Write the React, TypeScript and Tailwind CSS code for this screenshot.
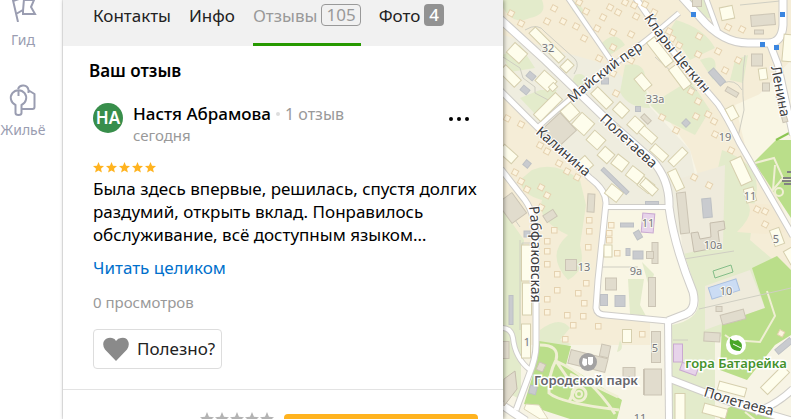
import type { ReactNode } from 'react'

interface Building {
    x: number,
    y: number,
    w: number,
    h: number,
    r?: number,
    kind?: 'light' | 'dark' | 'gray' | 'blue' | 'pink',
}

const houses = [
    [511, 13], [521, 23], [554, 8], [547, 21], [563, 21], [576, 26], [584, 38], [579, 2], [586, 11], [597, 28],
    [603, 17], [610, 7], [618, 12], [613, 32], [613, 47], [599, 58], [625, 2], [634, 5], [636, 16], [631, 34],
    [631, 60], [613, 73], [616, 93], [507, 118], [521, 124], [617, 128], [645, 4], [654, 12], [669, 31], [672, 38],
    [679, 45], [699, 36], [698, 54], [718, 51], [725, 70], [738, 60], [728, 27], [742, 29], [691, 91], [698, 101],
    [708, 114], [714, 121], [696, 116], [715, 134], [662, 117], [676, 130], [731, 150], [694, 177], [709, 185],
    [757, 209], [765, 211], [765, 224], [515, 172], [521, 181], [527, 189], [541, 187], [547, 195], [541, 207],
    [567, 171], [577, 177], [540, 145], [547, 151], [559, 163], [554, 230], [547, 241], [547, 251], [547, 264],
    [557, 274], [589, 220], [589, 231], [588, 247], [611, 225], [609, 233], [609, 240], [617, 253], [547, 299],
    [547, 312], [557, 290], [578, 293], [586, 283], [584, 303], [567, 315], [573, 325], [583, 316], [598, 326],
    [565, 339], [781, 333], [642, 334]
]

const buildings: Building[] = [
    { x: 517, y: 53, w: 17, h: 13, r: 42 },
    { x: 547, y: 45, w: 42, h: 9, r: 45 },
    { x: 567, y: 66, w: 11, h: 9, r: -45 },
    { x: 510, y: 76, w: 22, h: 10, r: 45 },
    { x: 546, y: 81, w: 17, h: 14, r: 42 },
    { x: 553, y: 87, w: 7, h: 6, r: -45 },
    { x: 548, y: 107, w: 31, h: 10, r: -45 },
    { x: 570, y: 112, w: 14, h: 14, r: -42 },
    { x: 583, y: 124, w: 17, h: 16, r: 42 },
    { x: 596, y: 140, w: 15, h: 13, r: 42 },
    { x: 602, y: 98, w: 22, h: 10, r: 45 },
    { x: 621, y: 110, w: 13, h: 11, r: 43 },
    { x: 636, y: 125, w: 14, h: 12, r: 43 },
    { x: 643, y: 82, w: 16, h: 10, r: 50 },
    { x: 558, y: 131, w: 28, h: 24, r: -43, kind: 'dark' },
    { x: 508, y: 154, w: 18, h: 10, r: 42 },
    { x: 584, y: 165, w: 14, h: 13, r: -42 },
    { x: 606, y: 155, w: 13, h: 12, r: 42 },
    { x: 620, y: 163, w: 14, h: 12, r: 38 },
    { x: 635, y: 175, w: 15, h: 12, r: 38 },
    { x: 646, y: 185, w: 14, h: 11, r: 38 },
    { x: 614, y: 193, w: 15, h: 12, r: 38 },
    { x: 659, y: 153, w: 18, h: 9, r: 42 },
    { x: 678, y: 157, w: 20, h: 8, r: -45 },
    { x: 676, y: 180, w: 21, h: 9, r: 65 },
    { x: 649, y: 187, w: 17, h: 9, r: 42 },
    { x: 660, y: 52, w: 31, h: 10, r: 52 },
    { x: 680, y: 77, w: 25, h: 10, r: 53 },
    { x: 732, y: 113, w: 13, h: 9, r: 62 },
    { x: 648, y: 135, w: 18, h: 9, r: 42 },
    { x: 763, y: 74, w: 8, h: 11, r: -8 },
    { x: 788, y: 48, w: 10, h: 27, r: 5 },
    { x: 741, y: 171, w: 27, h: 12, r: 65 },
    { x: 750, y: 195, w: 10, h: 14, r: -15 },
    { x: 777, y: 237, w: 10, h: 17, r: -20 },
    { x: 791, y: 256, w: 9, h: 15, r: -30 },
    { x: 527, y: 263, w: 11, h: 36 },
    { x: 527, y: 299, w: 9, h: 32 },
    { x: 526, y: 341, w: 9, h: 34 },
    { x: 608, y: 251, w: 8, h: 12 },
    { x: 627, y: 336, w: 9, h: 13 },
    { x: 732, y: 389, w: 28, h: 9, r: 15 },
    { x: 775, y: 380, w: 31, h: 10, r: -45 },
    { x: 680, y: 407, w: 10, h: 27 },
    { x: 715, y: 411, w: 24, h: 10, r: 15 },
    { x: 763, y: 20, w: 24, h: 11, r: -5, kind: 'dark' },
    { x: 759, y: 32, w: 9, h: 4, kind: 'dark' },
    { x: 727, y: 13, w: 13, h: 13, r: -12, kind: 'light' },
    { x: 757, y: 60, w: 11, h: 12, kind: 'dark' },
    { x: 766, y: 87, w: 7, h: 8, kind: 'dark' },
    { x: 697, y: 3, w: 9, h: 7, kind: 'dark' },
    { x: 782, y: 109, w: 5, h: 27, r: -15, kind: 'dark' },
    { x: 512, y: 208, w: 25, h: 18, r: 54, kind: 'dark' },
    { x: 591, y: 203, w: 7, h: 18, r: 3, kind: 'dark' },
    { x: 550, y: 216, w: 12, h: 8, r: -33, kind: 'dark' },
    { x: 571, y: 265, w: 11, h: 11, kind: 'dark' },
    { x: 505, y: 350, w: 8, h: 17, kind: 'dark' },
    { x: 541, y: 367, w: 7, h: 8, r: 25, kind: 'dark' },
    { x: 588, y: 361, w: 38, h: 14, r: 14, kind: 'dark' },
    { x: 605, y: 351, w: 9, h: 12, r: 12, kind: 'dark' },
    { x: 629, y: 372, w: 12, h: 9, kind: 'dark' },
    { x: 647, y: 382, w: 7, h: 25, kind: 'dark' },
    { x: 611, y: 284, w: 11, h: 12, kind: 'dark' },
    { x: 652, y: 292, w: 7, h: 29, kind: 'dark' },
    { x: 655, y: 253, w: 6, h: 21, kind: 'dark' },
    { x: 650, y: 255, w: 7, h: 7, kind: 'dark' },
    { x: 683, y: 213, w: 9, h: 41, r: -6, kind: 'dark' },
    { x: 656, y: 347, w: 9, h: 31, kind: 'dark' },
    { x: 653, y: 382, w: 17, h: 26, kind: 'dark' },
    { x: 712, y: 337, w: 16, h: 9, r: 3, kind: 'dark' },
    { x: 733, y: 317, w: 24, h: 10, r: -15, kind: 'dark' },
    { x: 719, y: 309, w: 6, h: 5, kind: 'dark' },
    { x: 646, y: 119, w: 10, h: 5, r: 45, kind: 'dark' },
    { x: 732, y: 92, w: 13, h: 5, r: 30, kind: 'dark' },
    { x: 531, y: 76, w: 8, h: 6, r: 40, kind: 'gray' },
    { x: 525, y: 90, w: 8, h: 6, r: 40, kind: 'gray' },
    { x: 605, y: 81, w: 7, h: 6, kind: 'gray' },
    { x: 638, y: 109, w: 5, h: 5, kind: 'gray' },
    { x: 527, y: 164, w: 6, h: 6, r: 40, kind: 'gray' },
    { x: 615, y: 181, w: 35, h: 4, r: 44, kind: 'gray' },
    { x: 717, y: 77, w: 18, h: 7, r: 48, kind: 'gray' },
    { x: 686, y: 123, w: 6, h: 6, r: 45, kind: 'gray' },
    { x: 527, y: 234, w: 6, h: 6, kind: 'gray' },
    { x: 627, y: 225, w: 13, h: 4, kind: 'gray' },
    { x: 638, y: 255, w: 10, h: 8, kind: 'gray' },
    { x: 628, y: 252, w: 4, h: 7, kind: 'gray' },
    { x: 638, y: 235, w: 6, h: 8, r: -30, kind: 'gray' },
    { x: 652, y: 203, w: 13, h: 3, kind: 'gray' },
    { x: 604, y: 300, w: 7, h: 11, kind: 'gray' },
    { x: 620, y: 301, w: 10, h: 11, kind: 'gray' },
    { x: 511, y: 310, w: 4, h: 29, kind: 'gray' },
    { x: 533, y: 390, w: 7, h: 8, r: 15, kind: 'gray' },
    { x: 707, y: 208, w: 9, h: 19, r: -5, kind: 'gray' },
    { x: 784, y: 346, w: 19, h: 6, r: -40, kind: 'gray' },
    { x: 724, y: 289, w: 29, h: 12, r: -18, kind: 'blue' },
    { x: 648, y: 223, w: 12, h: 19, r: 5, kind: 'pink' },
    { x: 678, y: 353, w: 9, h: 18, kind: 'pink' },
    { x: 689, y: 369, w: 17, h: 8, r: 20, kind: 'pink' }
]

const fills = {
    light: ['#fefdec', '#d6cfae'],
    dark: ['#e1dccd', '#cbc4b4'],
    gray: ['#c9cbcf', '#bdc0c4'],
    blue: ['#cbdcf4', '#a9bfdf'],
    pink: ['#e7d3ea', '#c9a9d1']
}

const roads = [
    { d: 'M568 -2L612 62', w: 4 },
    { d: 'M537 128Q575 93 612 66T679 13', w: 4 },
    { d: 'M606 207H669', w: 4 },
    { d: 'M706 -2L718 31', w: 4 },
    { d: 'M500 328Q511 327 513 338Q515 358 530 370', w: 4 },
    { d: 'M501 169L525 200Q536 215 536 245V345Q536 358 529 375L516 410', w: 5 },
    { d: 'M499 403L526 421', w: 7 },
    { d: 'M498 88L537 127L590 178Q606 190 606 203L598 280L596 308Q597 315 606 315L668 321', w: 5 },
    { d: 'M635 -3L675 54L718 104Q727 117 739 142L793 236', w: 5 },
    { d: 'M668 320L669 421', w: 6 },
    { d: 'M670 379L735 404L793 421', w: 6 },
    { d: 'M755 412Q775 406 793 389', w: 6 },
    { d: 'M770 44L778 65L793 135', w: 6 },
    { d: 'M499 18L545 60L605 118L652 160Q670 180 669 207Q674 245 693 292Q697 309 686 314L668 321', w: 7 },
    { d: 'M682 -3L700 17Q722 43 748 43H768Q782 43 783 25V-3', w: 7 }
]

const numbers = [
    { t: '32', x: 548, y: 52 }, { t: '33а', x: 655, y: 103 }, { t: '19', x: 725, y: 141 },
    { t: '11', x: 750, y: 200 }, { t: '5', x: 776, y: 243 }, { t: '11', x: 648, y: 227 },
    { t: '10а', x: 713, y: 249 }, { t: '13', x: 584, y: 271 }, { t: '9а', x: 636, y: 275 },
    { t: '10', x: 726, y: 295 }, { t: '1', x: 527, y: 346 }, { t: '5', x: 655, y: 352 }, { t: '11', x: 640, y: 422 }
]

const streets = [
    { t: 'Майский пер', d: 'M573 103Q605 73 665 35' },
    { t: 'Клары Цеткин', d: 'M644 18Q665 52 732 124' },
    { t: 'Полетаева', d: 'M599 120L635 153L675 190' },
    { t: 'Калинина', d: 'M535 133L565 159L608 197' },
    { t: 'Ленина', d: 'M771 67L785 140' },
    { t: 'Рабфаковская', d: 'M529 207Q532 225 531 255V340' },
    { t: 'Полетаева', d: 'M703 396L735 406L800 423' }
]

function CityMap () {
    return <svg
        className="block w-full h-full font-['Noto_Sans',sans-serif]"
        viewBox="503 0 288 419"
        preserveAspectRatio="xMinYMin slice"
        role="img"
        aria-label="Карта"
    >
        <rect x="503" width="288" height="419" fill="#f7f4e5" />
        {/* residential blocks */}
        <path fill="#f5edd7" d="M503 0H791V60L745 110L755 140L791 230V270L720 245L690 150L640 80L540 130L606 195L597 310L650 318V345H503Z" />
        <path fill="#efeddf" d="M503 35L612 66L690 150L700 200L675 240L668 207H608L590 175L503 92Z" />
        <path fill="#f9f6e4" d="M608 211H668L693 305L660 320L601 311ZM735 105L774 88L791 135L750 165Z" />
        {/* lawns */}
        <g fill="#e3ebcb">
            <path d="M503 0H542Q548 14 530 18Q514 26 503 8ZM503 55L520 45L535 68L510 72ZM520 98L540 90L557 90L537 116ZM575 75Q587 70 588 88L570 85Z" />
            <path d="M532 170Q555 160 580 180L586 205L580 245Q587 270 568 280Q545 255 568 235Q536 220 542 200Q522 195 520 180Z" />
            <path d="M625 65Q648 60 645 85L650 108Q628 108 620 92ZM600 45Q615 28 625 45L610 55ZM650 105L690 80L710 110L695 135L665 120Z" />
            <path d="M676 20Q704 28 715 48L690 60L670 30ZM700 60Q722 50 713 80ZM735 60L748 55L743 83L730 80ZM690 0L708 0L714 20L700 15Z" />
            <path d="M722 150Q765 165 755 200L750 240L791 275V310L750 320L715 340V419H672V325Q707 318 696 290L683 250L722 245L710 205Z" />
            <path d="M503 210L524 240L521 300V400L503 390ZM540 330Q560 315 570 328L560 340L571 344L558 350L540 342Z" />
            <path d="M628 279H644L640 305L646 316L630 314ZM572 0Q590 10 580 18L572 10ZM642 262L654 274L650 290ZM620 340Q625 350 617 352Z" />
        </g>
        <path fill="#f5ebd3" d="M737 232Q755 215 748 203L775 205L785 232L765 234Z" />
        <path fill="#efebdc" d="M675 180L725 165L723 245L683 254ZM705 286L750 270L765 308L705 330Z" />
        {/* parks */}
        <g fill="#bade8a">
            <path d="M539 341L571 346L566 365L622 400L617 419H570L524 404L532 378Z" />
            <path d="M754 162L776 140H791V218ZM752 268L777 256L791 270V335L775 345L747 380L720 370L722 323L765 308Z" />
        </g>
        <path d="M720 419L728 408L741 402L791 419Z" fill="#bade8a" />
        <g fill="none" stroke="#f0efd4" strokeWidth="3">
            <path d="M540 345Q560 345 556 360Q548 375 549 393Q560 403 619 410M556 361L575 389L569 402M556 361Q590 376 615 414M570 374L618 397" />
            <circle cx="579" cy="394" r="7" />
            <circle cx="579" cy="394" r="3" strokeWidth="2" />
            <path d="M755 163L774 158L783 178L773 190L775 165M791 180H780" strokeWidth="2" />
            <circle cx="779" cy="192" r="4" strokeWidth="2" />
            <path d="M767 291L775 316L760 342L732 340L725 335M745 412L755 420" strokeWidth="2" />
        </g>
        <path d="M787 172H791M783 178H791M782 181H791M784 184H791" stroke="#828282" strokeWidth="2" />
        <path d="M776 140L791 132" stroke="#8cc652" strokeWidth="2" />
        <g fill="none" stroke="#cfcec2">
            <path d="M503 57L520 68L523 78L535 87V93L550 101M525 30Q538 22 545 32L575 59Q580 65 574 74M745 55Q741 80 744 110L738 137M723 83Q735 78 742 90M740 5L780 1M503 203L520 227M520 240V330M523 277H522V243H535" />
            <path d="M600 267H638M684 259L734 251M673 340H688M699 309L791 288M665 180L655 165M655 57L681 80M680 78L697 91M605 170L620 188" />
        </g>
        <path d="M713 271L731 265L733 272L715 278Z" fill="none" stroke="#83bd88" />
        {roads.map((road) => <path key={road.d} d={road.d} fill="none" stroke="#cfcdc8" strokeWidth={road.w + 2} />)}
        {roads.map((road) => <path key={road.d} d={road.d} fill="none" stroke="#fff" strokeWidth={road.w} />)}
        {houses.map(([x, y]) => <rect
            key={`${x}-${y}`}
            x={x - 2.5}
            y={y - 2.5}
            width="5.5"
            height="5.5"
            fill="#fcf4df"
            stroke="#e5d2b0"
            transform={y > 215 && x < 650 ? undefined : `rotate(28 ${x} ${y})`}
        />)}
        {buildings.map(({ x, y, w, h, r = 0, kind = 'light' }) => <rect
            key={`${x}-${y}`}
            x={x - w / 2}
            y={y - h / 2}
            width={w}
            height={h}
            fill={fills[kind][0]}
            stroke={fills[kind][1]}
            transform={`rotate(${r} ${x} ${y})`}
        />)}
        <path d="M691 233L698 232L700 239L711 237L710 223L724 221L725 229L718 231L720 247L694 252Z" fill="#e1dccd" stroke="#c5bdad" />
        <path d="M504 379L515 371L517 389L504 406Z" fill="#e1dccd" stroke="#c5bdad" />
        <path d="M526 404L539 405L548 419H540L524 409Z" fill="#fefdec" stroke="#dcd6b9" />
        <g fill="#3b86e0">
            <rect x="691" y="12" width="5" height="5" />
            <rect x="780" y="12" width="5" height="5" />
            <rect x="760" y="42" width="5" height="5" />
            <rect x="774" y="45" width="5" height="5" />
        </g>
        <g fill="#77777b" stroke="#f8f7ed" strokeWidth="2" paintOrder="stroke" fontSize="11" textAnchor="middle">
            {numbers.map((n) => <text key={`${n.x}-${n.y}`} x={n.x} y={n.y}>{n.t}</text>)}
        </g>
        <g fill="#3d3d40" stroke="#fff" strokeWidth="2" paintOrder="stroke" fontSize="14">
            {streets.map((street, i) => <g key={street.d}>
                <path id={`street-${i}`} d={street.d} fill="none" stroke="none" />
                <text><textPath href={`#street-${i}`}>{street.t}</textPath></text>
            </g>)}
        </g>
        <circle cx="588" cy="362" r="9" fill="#a3a2a2" />
        <path d="M583 358L587 359V365Q583 368 582 363ZM588 357H593V363Q591 367 588 364Z" fill="#fff" />
        <circle cx="736" cy="345" r="10" fill="#fff" />
        <path d="M730 338Q733 342 738 340Q745 345 740 351Q733 351 731 347Q729 343 730 338Z" fill="#49a728" />
        <path d="M733 344L741 348" stroke="#fff" />
        <g stroke="#fff" strokeWidth="3" paintOrder="stroke" fontSize="13" fontWeight="600" textAnchor="middle">
            <text x="586" y="385" fill="#66666d">Городской парк</text>
            <text x="736" y="368" fill="#44922c">гора Батарейка</text>
        </g>
    </svg>
}

function Stars ({ size, color }: { size: 'small' | 'large', color: string }) {
    return <div className={`flex ${size === 'small' ? 'gap-[2px]' : 'gap-[1px]'}`} role="img" aria-label="Оценка">
        {[1, 2, 3, 4, 5].map((n) => <svg
            key={n}
            className={size === 'small' ? 'w-[11px] h-[11px]' : 'w-[14px] h-[14px]'}
            viewBox="0 0 20 20"
            fill={color}
        >
            <path d="M10 0L12.8 6.8L20 7.4L14.5 12.1L16.2 19L10 15.3L3.8 19L5.5 12.1L0 7.4L7.2 6.8Z" />
        </svg>)}
    </div>
}

function SideLink ({ label, children }: { label: string, children: ReactNode }) {
    return <a href="#" className="flex flex-col items-center text-[14px] leading-5 text-[#9a9db1]">
        {children}
        <span>{label}</span>
    </a>
}

export default function App () {
    return <div className="flex w-full h-screen overflow-hidden bg-white font-['Noto_Sans',sans-serif] text-black">
        <nav className="flex flex-none flex-col w-[63px] pr-4 gap-[34px] -mt-[10px] border-r border-[#eee]">
            <SideLink label="Гид">
                <svg className="w-8 h-8 mb-2" viewBox="0 0 32 32" fill="none" stroke="#9a9db1" strokeWidth="2">
                    <path d="M5 6L11 32M6 11L18 7V10H27L24 17L28 24H16V20L9 24M17 9L16 21" />
                </svg>
            </SideLink>
            <SideLink label="Жильё">
                <svg className="w-8 h-8 mb-1" viewBox="0 0 32 32" fill="none" stroke="#9a9db1" strokeWidth="2" strokeLinejoin="round">
                    <path d="M8.5 21A7.7 7.7 0 1 1 14.5 21V29Q14.5 31 11.5 31Q8.5 31 8.5 29Z" />
                    <path d="M11.5 6V12M11 5A5.5 5.5 0 0 1 21.5 6V9M21 6L27.5 10V23Q27.5 25 25.5 25H15" />
                </svg>
            </SideLink>
        </nav>
        <main className="flex flex-none flex-col w-[440px] shadow-[1px_0_4px_#0006] z-10 bg-white">
            <nav className="flex flex-none h-[46px] gap-[18px] pl-[30px] bg-[#f1f1f1] text-[17px] leading-8 text-[#222]">
                <a href="#">Контакты</a>
                <a href="#">Инфо</a>
                <a href="#" className="flex items-start gap-1 border-b-3 border-[#269900] text-[#999]">
                    Отзывы
                    <span className="mt-1 px-1 border border-[#999] rounded-sm leading-5">105</span>
                </a>
                <a href="#" className="flex items-start gap-1">
                    Фото
                    <span className="mt-1 px-[5px] rounded-sm leading-[22px] bg-[#929292] font-medium text-white">4</span>
                </a>
            </nav>
            <section className="flex flex-none flex-col px-[30px] pt-3">
                <h2 className="-ml-1 text-[17px] leading-[26px] font-semibold">Ваш отзыв</h2>
                <div className="flex mt-[18px] items-start">
                    <div className="flex flex-none items-center justify-center w-[30px] h-[30px] mt-px rounded-full bg-[#388e4b] text-[17px] font-semibold text-white">НА</div>
                    <div className="flex-1 ml-[10px]">
                        <div className="flex items-center text-[17px] leading-6">
                            <span className="font-medium">Настя Абрамова</span>
                            <span className="w-1 h-1 mx-[5px] rounded-full bg-[#ddd]" />
                            <span className="text-[16px] text-[#999]">1 отзыв</span>
                        </div>
                        <div className="text-[15px] leading-[18px] mb-[2px] text-[#999]">сегодня</div>
                    </div>
                    <button className="flex gap-1 p-1 mt-[11px]" aria-label="Ещё">
                        <span className="w-1 h-1 rounded-full bg-black" />
                        <span className="w-1 h-1 rounded-full bg-black" />
                        <span className="w-1 h-1 rounded-full bg-black" />
                    </button>
                </div>
                <div className="mt-4"><Stars size="small" color="#ffb31f" /></div>
                <p className="mt-1 text-[17px] leading-[23px] whitespace-nowrap">
                    Была здесь впервые, решилась, спустя долгих<br />
                    раздумий, открыть вклад. Понравилось<br />
                    обслуживание, всё доступным языком…
                </p>
                <a href="#" className="mt-[10px] text-[17px] leading-6 text-[#0070cc]">Читать целиком</a>
                <div className="mt-[10px] text-[15px] leading-6 text-[#999]">0 просмотров</div>
                <button className="flex self-start items-center h-10 mt-[15px] gap-2 pl-[9px] pr-[6px] border border-[#ddd] rounded-sm text-[17px] text-[#222]">
                    <svg className="w-[26px] h-6" viewBox="0 0 26 24" fill="#8a8a8a">
                        <path d="M13 24L2 12.5Q-1 8 1 4Q4 0 9 1Q12 1.5 13 4Q15 1 18 1Q23 0 25 4Q27 8 24 12.5Z" />
                    </svg>
                    Полезно?
                </button>
            </section>
            <div className="flex flex-none mt-5 pt-[22px] pr-[25px] justify-end gap-[10px] border-t border-[#e3e3e3]">
                <Stars size="large" color="#b3b3b3" />
                <button className="w-[194px] h-10 mt-[2px] rounded-sm bg-[#ffb31f]" aria-label="Оценить" />
            </div>
        </main>
        <aside className="flex-1 min-w-0">
            <CityMap />
        </aside>
    </div>
}
